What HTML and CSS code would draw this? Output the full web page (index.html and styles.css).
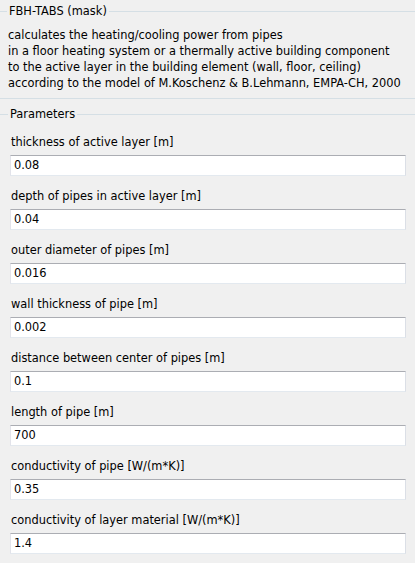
FILE: index.html
```html
<!DOCTYPE html>
<html>
<head>
<meta charset="utf-8">
<link rel="stylesheet" href="styles.css">
</head>
<body>
<fieldset class="group desc">
  <legend class="group-title">FBH-TABS (mask)</legend>
  <div class="line">calculates the heating/cooling power from pipes</div>
  <div class="line">in a floor heating system or a thermally active building component</div>
  <div class="line">to the active layer in the building element (wall, floor, ceiling)</div>
  <div class="line">according to the model of M.Koschenz &amp; B.Lehmann, EMPA-CH, 2000</div>
</fieldset>
<fieldset class="group params">
  <legend class="group-title">Parameters</legend>
  <div class="param"><div class="label">thickness of active layer [m]</div><div class="field">0.08</div></div>
  <div class="param"><div class="label">depth of pipes in active layer [m]</div><div class="field">0.04</div></div>
  <div class="param"><div class="label">outer diameter of pipes [m]</div><div class="field">0.016</div></div>
  <div class="param"><div class="label">wall thickness of pipe [m]</div><div class="field">0.002</div></div>
  <div class="param"><div class="label">distance between center of pipes [m]</div><div class="field">0.1</div></div>
  <div class="param"><div class="label">length of pipe [m]</div><div class="field">700</div></div>
  <div class="param"><div class="label">conductivity of pipe [W/(m*K)]</div><div class="field">0.35</div></div>
  <div class="param"><div class="label">conductivity of layer material [W/(m*K)]</div><div class="field">1.4</div></div>
</fieldset>
</body>
</html>
```
FILE: styles.css
```css
html, body {
  margin: 0;
  padding: 0;
  background: #f0f0f0;
}
body {
  font-family: "DejaVu Sans", sans-serif;
  font-size: 11.4px;
  line-height: 16px;
  color: #000;
  overflow: hidden;
}
.group {
  margin: 0;
  min-width: 0;
  border: none;
  border-top: 1px solid #d5dfe5;
  border-bottom: 1px solid #d5dfe5;
}
.group-title {
  padding: 0 2px;
  margin-left: -3px;
  line-height: 16px;
}
.desc {
  margin-top: 3px;
  padding: 8px 8px 7px 8px;
}
.params {
  margin-top: 7px;
  padding: 12px 9px 20px 10px;
}
.desc .group-title {
  margin-left: -1px;
}
.params .group-title {
  margin-left: -2px;
}
.param {
  display: flex;
  flex-direction: column;
  gap: 5px;
  margin-bottom: 12px;
}
.label {
  padding-left: 1px;
  white-space: nowrap;
}
.field {
  height: 19px;
  line-height: 19px;
  background: #fff;
  border: 1px solid;
  border-color: #abadb3 #dbdfe6 #e3e9ef #e2e3ea;
  padding: 0 3px;
}
```
